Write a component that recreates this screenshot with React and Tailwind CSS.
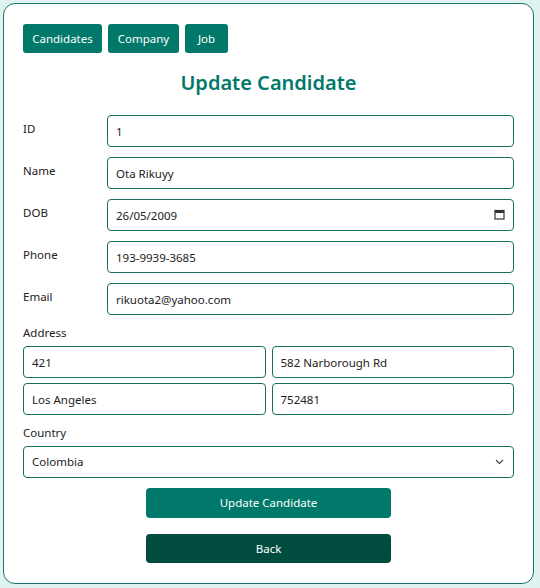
import { useState } from "react";

const Row = ({ label, children }) => (
    <div className="flex items-start">
        <label className="w-[84px] shrink-0 pt-[5px] text-[11.5px] text-[#222]">{label}</label>
        <div className="flex-1">{children}</div>
    </div>
);

const inputCls =
    "w-full h-[32px] px-[8px] rounded-[4px] border border-[#17705f] bg-white text-[11.5px] text-[#222] outline-none";

export default function App() {
    const [form, setForm] = useState({
        id: "1",
        name: "Ota Rikuyy",
        dob: "26/05/2009",
        phone: "193-9939-3685",
        email: "rikuota2@yahoo.com",
        street1: "421",
        street2: "582 Narborough Rd",
        city: "Los Angeles",
        zip: "752481",
        country: "Colombia",
    });

    const set = (k) => (e) => setForm({ ...form, [k]: e.target.value });

    return (
        <div className="min-h-[588px] bg-[#dff3f1] p-[3px] font-['Noto_Sans',sans-serif]">
            <div className="h-[581px] w-[531px] rounded-[12px] border border-[#17766a] bg-white px-[19px] pt-[20px]">
                {/* nav */}
                <div className="flex gap-[6px]">
                    <button className="h-[29px] w-[79px] rounded-[3px] bg-[#00796b] text-[11.5px] text-white">Candidates</button>
                    <button className="h-[29px] w-[71px] rounded-[3px] bg-[#00796b] text-[11.5px] text-white">Company</button>
                    <button className="h-[29px] w-[43px] rounded-[3px] bg-[#00796b] text-[11.5px] text-white">Job</button>
                </div>

                <h1 className="mt-[13px] text-center text-[20px] font-semibold leading-[34px] text-[#00796b]">Update Candidate</h1>

                <div className="mt-[15px] flex flex-col gap-[10px]">
                    <Row label="ID">
                        <input className={inputCls} value={form.id} onChange={set("id")} />
                    </Row>
                    <Row label="Name">
                        <input className={inputCls} value={form.name} onChange={set("name")} />
                    </Row>
                    <Row label="DOB">
                        <div className="relative">
                            <input className={inputCls} value={form.dob} onChange={set("dob")} />
                            <svg className="absolute right-[9px] top-[10px]" width="11" height="11" viewBox="0 0 11 11">
                                <rect x="1" y="1.5" width="9" height="8.5" fill="none" stroke="#333" strokeWidth="1.2" />
                                <rect x="1" y="1.5" width="9" height="2.5" fill="#333" />
                            </svg>
                        </div>
                    </Row>
                    <Row label="Phone">
                        <input className={inputCls} value={form.phone} onChange={set("phone")} />
                    </Row>
                    <Row label="Email">
                        <input className={inputCls} value={form.email} onChange={set("email")} />
                    </Row>
                </div>

                <div className="mt-[10px] text-[11.5px] leading-[16px] text-[#222]">Address</div>
                <div className="mt-[5px] grid grid-cols-2 gap-x-[6px] gap-y-[5px]">
                    <input className={inputCls} value={form.street1} onChange={set("street1")} />
                    <input className={inputCls} value={form.street2} onChange={set("street2")} />
                    <input className={inputCls} value={form.city} onChange={set("city")} />
                    <input className={inputCls} value={form.zip} onChange={set("zip")} />
                </div>

                <div className="mt-[10px] text-[11.5px] leading-[16px] text-[#222]">Country</div>
                <div className="relative mt-[5px]">
                    <select className={inputCls + " appearance-none"} value={form.country} onChange={set("country")}>
                        <option>Colombia</option>
                        <option>Japan</option>
                        <option>United States</option>
                    </select>
                    <svg className="pointer-events-none absolute right-[10px] top-[13px]" width="9" height="6" viewBox="0 0 9 6">
                        <path d="M1 1l3.5 3.5L8 1" fill="none" stroke="#444" strokeWidth="1.1" />
                    </svg>
                </div>

                <div className="mt-[10px] flex flex-col items-center gap-[16px]">
                    <button className="h-[30px] w-[245px] rounded-[4px] bg-[#00796b] text-[11.5px] text-white">Update Candidate</button>
                    <button className="h-[29px] w-[245px] rounded-[4px] bg-[#004d40] text-[11.5px] text-white">Back</button>
                </div>
            </div>
        </div>
    );
}
